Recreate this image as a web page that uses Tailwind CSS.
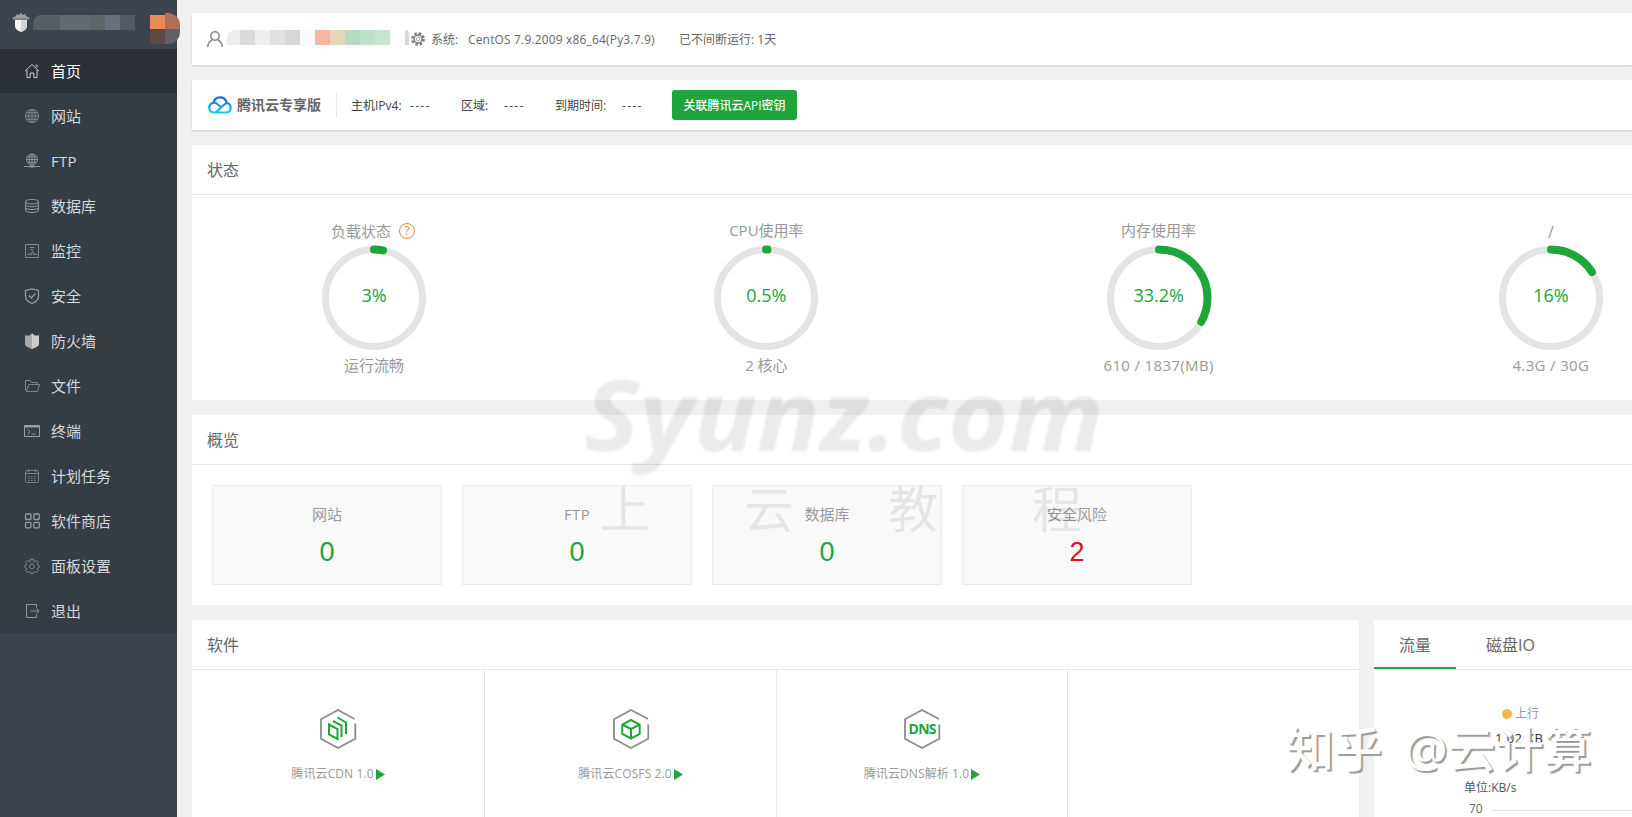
<!DOCTYPE html>
<html lang="zh-CN">
  <head>
    <meta charset="UTF-8" />
    <meta name="viewport" content="width=device-width, initial-scale=1.0" />
    <title>首页</title>
    <script src="https://cdn.jsdelivr.net/npm/@tailwindcss/browser@4"></script>
  </head>
  <body
    class="relative flex h-[817px] w-[1632px] overflow-hidden bg-[#f0f0f0] text-xs text-[#666] font-['Open_Sans','Noto_Sans_CJK_SC',sans-serif]"
  >
    <!-- sidebar -->
    <aside class="w-[177px] shrink-0 bg-[#3c444d]">
      <div class="flex h-[49px] items-start pl-3 pt-[13px]">
        <svg class="h-[19px] w-[18px] shrink-0" viewBox="0 0 18 19">
          <path d="M0 5l4-2 1-2 2 1 2-2 2 2 2-1 1 2 4 2-2 2H2z" fill="#9da1a5" />
          <path d="M3 7h12v6c0 3-3 5-6 6-3-1-6-3-6-6z" fill="#f5f5f5" />
          <path d="M9 7h6v6c0 3-3 5-6 6z" fill="#d2d4d6" />
          <path d="M1 6h16" stroke="#5d646b" stroke-width="1" />
        </svg>
        <div class="mt-0.5 ml-[3px] flex h-[15px] w-[102px] shrink-0 overflow-hidden rounded-tl-lg">
          <i class="w-[27px] bg-[#575e66]"></i>
          <i class="w-[30px] bg-[#636971]"></i>
          <i class="w-[15px] bg-[#5f6468]"></i>
          <i class="w-[15px] bg-[#697079]"></i>
          <i class="w-[15px] bg-[#555b62]"></i>
        </div>
        <div
          class="relative z-10 ml-[15px] grid h-[31px] w-[30px] shrink-0 grid-cols-2 grid-rows-2 overflow-hidden rounded-r-xl"
        >
          <i class="mt-0.5 bg-[#e98b54]"></i>
          <i class="bg-[#ad705a]"></i>
          <i class="bg-[#5d4a44]"></i>
          <i class="bg-[#606166]"></i>
        </div>
      </div>
      <ul class="bg-[#353d44] text-[15px] text-[#d5d8da]">
        <li class="flex h-11 items-center gap-[11px] bg-[#2c3138] pl-6 text-white">
          <svg class="size-4 text-[#c8cacc]" viewBox="0 0 16 16" fill="none" stroke="currentColor">
            <path d="M1 8.2L8 1.5l7 6.7M3 7v7.5h3.2V10h3.6v4.500H13V7M11.500 2.200h1.500v2.500" />
          </svg>
          首页
        </li>
        <li class="flex h-[45px] items-center gap-[11px] pl-6">
          <svg class="size-4 text-[#838a90]" viewBox="0 0 16 16" fill="none" stroke="currentColor">
            <circle cx="8" cy="8" r="6.500" />
            <ellipse cx="8" cy="8" rx="3.200" ry="6.500" />
            <path d="M8 1.500v13M1.500 8h13M2.500 4.800h11M2.500 11.200h11" />
          </svg>
          网站
        </li>
        <li class="flex h-[45px] items-center gap-[11px] pl-6">
          <svg class="size-4 text-[#8b9196]" viewBox="0 0 16 16" fill="none" stroke="currentColor">
            <circle cx="8" cy="6.500" r="5.500" />
            <ellipse cx="8" cy="6.500" rx="2.700" ry="5.500" />
            <path d="M8 1v11M2.500 6.500h11M3.200 3.800h9.600M3.200 9.300h9.600M0 13.500h16" />
            <path d="M5.500 13.500h5" stroke-width="2" />
          </svg>
          <span class="tracking-[.3px]">FTP</span>
        </li>
        <li class="flex h-[45px] items-center gap-[11px] pl-6">
          <svg class="size-4 text-[#92989d]" viewBox="0 0 16 16" fill="none" stroke="currentColor">
            <ellipse cx="8" cy="3.700" rx="6.500" ry="2.300" />
            <path d="M1.500 3.700v8.500c0 3 13 3 13 0V3.700M1.500 6.500c0 3 13 3 13 0M1.500 9.300c0 3 13 3 13 0" />
          </svg>
          数据库
        </li>
        <li class="flex h-[45px] items-center gap-[11px] pl-6">
          <svg class="size-4 text-[#7e858b]" viewBox="0 0 16 16" fill="none" stroke="currentColor">
            <path d="M1.500 1.500h13v13h-13zM5.500 4.500h5M6.500 6.500h2.500M3 12l2-1.500 1 1.500h1L8.500 8l1.500 4 1-1.500 2 1.500" />
          </svg>
          监控
        </li>
        <li class="flex h-[45px] items-center gap-[11px] pl-6">
          <svg class="size-4 text-[#989da1]" viewBox="0 0 16 16" fill="none" stroke="currentColor" stroke-width="1.200">
            <path d="M8 .8l6.500 1.700v6c0 3-3 5.500-6.500 7-3.500-1.500-6.500-4-6.500-7v-6z" />
            <path d="M4.800 7.500L7.300 10l4.200-4.500" />
          </svg>
          安全
        </li>
        <li class="flex h-[45px] items-center gap-[11px] pl-6">
          <svg class="size-4" viewBox="0 0 16 16">
            <path d="M1 2l2 .8 1.500-.6 1 .3L7 1l1-.8V16c-4-1.500-7-3-7-5z" fill="#aaa9a8" />
            <path d="M15 2l-2 .8-1.500-.6-1 .3L9 1 8 .2V16c4-1.500 7-3 7-5z" fill="#cfcdcb" />
          </svg>
          防火墙
        </li>
        <li class="flex h-[45px] items-center gap-[11px] pl-6">
          <svg class="size-4 text-[#7e858b]" viewBox="0 0 16 16" fill="none" stroke="currentColor">
            <path d="M2.500 13.500l-1-1v-10h4.500l1.500 2h6v2M2.500 13.500l2.300-7h10.700l-2 7z" />
          </svg>
          文件
        </li>
        <li class="flex h-[45px] items-center gap-[11px] pl-6">
          <svg class="size-4 text-[#9a9fa3]" viewBox="0 0 16 16" fill="none" stroke="currentColor">
            <path d="M.5 2.500h15v11H.5z" />
            <path d="M.5 3.500h15" stroke-width="2" />
            <path d="M3.500 6.500L6 8.700 3.500 11M7.500 11h4" />
          </svg>
          终端
        </li>
        <li class="flex h-[45px] items-center gap-[11px] pl-6">
          <svg class="size-4 text-[#777e84]" viewBox="0 0 16 16" fill="none" stroke="currentColor">
            <rect x="1.500" y="2.500" width="13" height="12" rx="1" />
            <path d="M1.500 5.500h13M4.500 1v3M11.500 1v3" />
            <path d="M4 8.500h8.500M4 10.500h8.500M4 12.500h8.500" stroke-dasharray="1.500 1.500" />
          </svg>
          计划任务
        </li>
        <li class="flex h-[45px] items-center gap-[11px] pl-6">
          <svg class="size-4 text-[#969b9f]" viewBox="0 0 16 16" fill="none" stroke="currentColor" stroke-width="1.300">
            <rect x="1.500" y="1" width="5.500" height="5.500" rx="1" />
            <rect x="9.800" y="1" width="5.500" height="5.500" rx="1" />
            <rect x="1.500" y="9.300" width="5.500" height="5.500" rx="1" />
            <rect x="9.800" y="9.300" width="5.500" height="5.500" rx="1" />
          </svg>
          软件商店
        </li>
        <li class="flex h-[45px] items-center gap-[11px] pl-6">
          <svg class="size-4 text-[#7e858b]" viewBox="0 0 16 16" fill="none" stroke="currentColor">
            <path d="M6.700 1.200h2.600l.4 1.800 1.300.6 1.600-1 1.800 1.800-1 1.600.6 1.300 1.200.3v1.900l-1.300.5-.6 1.300 1 1.600-1.700 1.700-1.600-1-1.300.5-.4 1.500H6.700l-.4-1.500-1.300-.5-1.600 1-1.700-1.700 1-1.600-.6-1.300-1.300-.5V7.600l1.200-.3.6-1.300-1-1.600 1.800-1.800 1.600 1 1.300-.6z" />
            <circle cx="8" cy="8.300" r="2.400" />
          </svg>
          面板设置
        </li>
        <li class="flex h-[45px] items-center gap-[11px] pl-6">
          <svg class="size-4 text-[#90969b]" viewBox="0 0 16 16" fill="none" stroke="currentColor">
            <path d="M12.500 4.500v-3H2.500v13h10v-3M6.500 8h8.500M12.500 5.500L15 8l-2.500 2.500" />
          </svg>
          退出
        </li>
      </ul>
    </aside>

    <main class="ml-[15px] flex w-[1440px] shrink-0 flex-col pt-[13px]">
      <!-- system info -->
      <div class="mb-[15px] flex h-[52px] shrink-0 items-center bg-white pl-[15px] shadow-[0_1px_2px_rgba(0,0,0,.15)]">
        <svg class="size-4" viewBox="0 0 16 16" fill="none" stroke="#888" stroke-width="1.500">
          <circle cx="8" cy="5" r="4.200" />
          <path d="M.8 16c0-4 2-6 4.500-7.200M15.200 16c0-4-2-6-4.500-7.200" />
        </svg>
        <div class="mb-[3px] ml-1 flex h-[15px] w-[163px] overflow-hidden rounded-tl-lg">
          <i class="w-[13px] bg-[#ededed]"></i>
          <i class="w-[15px] bg-[#dadada]"></i>
          <i class="w-[15px] bg-[#eee]"></i>
          <i class="w-[15px] bg-[#e0e0e0]"></i>
          <i class="w-[15px] bg-[#d7d7d7]"></i>
          <i class="w-[15px] bg-[#fafafa]"></i>
          <i class="w-[15px] bg-[#f8b5a0]"></i>
          <i class="w-[15px] bg-[#e8d6b8]"></i>
          <i class="w-[15px] bg-[#b5dbbf]"></i>
          <i class="w-[15px] bg-[#bce1c8]"></i>
          <i class="w-[15px] bg-[#c8e5d3]"></i>
        </div>
        <i class="mb-1 ml-[15px] h-[15px] w-1 rounded-tr-full bg-[#d8d8d8]"></i>
        <svg class="ml-[2px] size-[14px]" viewBox="0 0 14 14" fill="none" stroke="#777">
          <circle cx="7" cy="7" r="5.700" stroke-width="2.300" stroke-dasharray="2.500 1.977" />
          <circle cx="7" cy="7" r="4" stroke-width="1.500" />
          <circle cx="7" cy="7" r="1.800" stroke="#aaa" />
        </svg>
        <span class="ml-1.5 w-[37px] pt-0.5">系统:</span>
        <span class="w-[211px] whitespace-nowrap pt-0.5 tracking-[.16px]">CentOS 7.9.2009 x86_64(Py3.7.9)</span>
        <span class="pt-0.5">已不间断运行: 1天</span>
      </div>

      <!-- cloud host -->
      <div
        class="mb-[15px] flex h-[50px] shrink-0 items-center bg-white pl-4 text-[#444] shadow-[0_1px_2px_rgba(0,0,0,.15)]"
      >
        <svg class="h-[18px] w-6" viewBox="0 0 24 18" fill="none" stroke-width="2.200">
          <defs>
            <linearGradient id="cloud" x1="0" y1="0" x2="0" y2="1">
              <stop offset="0" stop-color="#1a86ea" />
              <stop offset="1" stop-color="#17c8ee" />
            </linearGradient>
          </defs>
          <path d="M5.500 7.200C6 3.500 8.500 1.400 12 1.400c3.500 0 5.800 2 6.500 4.800" stroke="#1670e5" />
          <path
            d="M13.500 11.500L9.300 8C5.500 5 1.300 8 1.300 11.500c0 3 2 5 5 5h1.500L16.500 8.300c3-2.600 6.200-.3 6.200 3.200 0 3-2 5-5 5H7"
            stroke="url(#cloud)"
          />
        </svg>
        <span class="ml-[5px] w-[99px] text-sm font-bold text-[#666]">腾讯云专享版</span>
        <i class="h-[25px] w-px bg-[#e3e3e3]"></i>
        <span class="ml-3.5 w-[59px] pt-0.5">主机IPv4:</span>
        <span class="w-[51px] pt-0.5 tracking-[1.300px]">----</span>
        <span class="w-[43px] pt-0.5">区域:</span>
        <span class="w-[51px] pt-0.5 tracking-[1.300px]">----</span>
        <span class="w-[67px] pt-0.5">到期时间:</span>
        <span class="w-[50px] pt-0.5 tracking-[1.300px]">----</span>
        <button class="h-[30px] w-[125px] rounded-[3px] bg-[#20a53a] pt-0.5 font-medium text-white">
          关联腾讯云API密钥
        </button>
      </div>

      <!-- status -->
      <section class="mb-[15px] h-[255px] shrink-0 bg-white">
        <h3 class="flex h-[50px] items-center border-b border-[#e6e6e6] pl-[15px] text-base">状态</h3>
        <div class="-ml-[14px] grid w-[1569px] grid-cols-4 text-center text-[15px] text-[#999]">
          <div class="flex flex-col items-center pt-6">
            <div class="-ml-0.5 flex h-[23px] items-center gap-2">
              <span>负载状态</span>
              <span
                class="flex size-4 items-center justify-center rounded-full border border-[#e08a3c] text-xs text-[#e08a3c]"
                >?</span
              >
            </div>
            <div class="relative mt-[3px] size-[106px]">
              <svg class="-rotate-90" viewBox="0 0 106 106" fill="none">
                <circle cx="53" cy="53" r="48.500" stroke="#e4e4e4" stroke-width="7" />
                <circle cx="53" cy="53" r="48.500" stroke="#20a53a" stroke-width="8" stroke-linecap="round" pathLength="100" stroke-dasharray="3 100" />
              </svg>
              <span class="absolute inset-0 flex items-center justify-center pb-1.5 text-lg text-[#20a53a]">3%</span>
            </div>
            <span class="mt-1">运行流畅</span>
          </div>
          <div class="flex flex-col items-center pt-6">
            <div class="h-[23px] pt-px">CPU使用率</div>
            <div class="relative mt-[3px] size-[106px]">
              <svg class="-rotate-90" viewBox="0 0 106 106" fill="none">
                <circle cx="53" cy="53" r="48.500" stroke="#e4e4e4" stroke-width="7" />
                <circle cx="53" cy="53" r="48.500" stroke="#20a53a" stroke-width="8" stroke-linecap="round" pathLength="100" stroke-dasharray="0.500 100" />
              </svg>
              <span class="absolute inset-0 flex items-center justify-center pb-1.5 text-lg text-[#20a53a]">0.5%</span>
            </div>
            <span class="mt-1">2 核心</span>
          </div>
          <div class="flex flex-col items-center pt-6">
            <div class="h-[23px] pt-px">内存使用率</div>
            <div class="relative mt-[3px] size-[106px]">
              <svg class="-rotate-90" viewBox="0 0 106 106" fill="none">
                <circle cx="53" cy="53" r="48.500" stroke="#e4e4e4" stroke-width="7" />
                <circle cx="53" cy="53" r="48.500" stroke="#20a53a" stroke-width="8" stroke-linecap="round" pathLength="100" stroke-dasharray="33.200 100" />
              </svg>
              <span class="absolute inset-0 flex items-center justify-center pb-1.5 text-lg text-[#20a53a]">33.2%</span>
            </div>
            <span class="mt-1 tracking-[.35px]">610 / 1837(MB)</span>
          </div>
          <div class="flex flex-col items-center pt-6">
            <div class="h-[23px] pt-px text-base">/</div>
            <div class="relative mt-[3px] size-[106px]">
              <svg class="-rotate-90" viewBox="0 0 106 106" fill="none">
                <circle cx="53" cy="53" r="48.500" stroke="#e4e4e4" stroke-width="7" />
                <circle cx="53" cy="53" r="48.500" stroke="#20a53a" stroke-width="8" stroke-linecap="round" pathLength="100" stroke-dasharray="16 100" />
              </svg>
              <span class="absolute inset-0 flex items-center justify-center pb-1.5 text-lg text-[#20a53a]">16%</span>
            </div>
            <span class="mt-1 tracking-[.35px]">4.3G / 30G</span>
          </div>
        </div>
      </section>

      <!-- overview -->
      <section class="mb-[15px] h-[190px] shrink-0 bg-white">
        <h3 class="flex h-[50px] items-center border-b border-[#e6e6e6] pl-[15px] text-base">概览</h3>
        <div class="flex gap-5 pl-5 pt-5 text-center text-[15px] text-[#999]">
          <div class="h-[100px] w-[230px] border border-[#ececec] bg-[#f9f9f9] pt-[18px]">
            <p>网站</p>
            <p class="mt-2.5 font-['Liberation_Sans'] text-[27px] leading-9 text-[#20a53a]">0</p>
          </div>
          <div class="h-[100px] w-[230px] border border-[#ececec] bg-[#f9f9f9] pt-[18px]">
            <p class="tracking-[.3px]">FTP</p>
            <p class="mt-2.5 font-['Liberation_Sans'] text-[27px] leading-9 text-[#20a53a]">0</p>
          </div>
          <div class="h-[100px] w-[230px] border border-[#ececec] bg-[#f9f9f9] pt-[18px]">
            <p>数据库</p>
            <p class="mt-2.5 font-['Liberation_Sans'] text-[27px] leading-9 text-[#20a53a]">0</p>
          </div>
          <div class="h-[100px] w-[230px] border border-[#ececec] bg-[#f9f9f9] pt-[18px]">
            <p>安全风险</p>
            <p class="mt-2.5 font-['Liberation_Sans'] text-[27px] leading-9 text-[#e01020]">2</p>
          </div>
        </div>
      </section>

      <div class="flex flex-1 gap-[15px]">
        <!-- software -->
        <section class="w-[1167px] shrink-0 bg-white">
          <h3 class="flex h-[50px] items-center border-b border-[#e6e6e6] pl-[15px] text-base">软件</h3>
          <div class="grid h-[147px] grid-cols-[293px_292px_291px_1fr] text-[#999]">
            <div class="flex flex-col items-center border-r border-[#e6e6e6] pt-[38px]">
              <svg class="h-[42px] w-[38px]" viewBox="0 0 38 42" fill="none" stroke="#8c8c8c" stroke-width="1.800">
                <path d="M35.500 11L19 2 2 11.300v19.400L19 40l17.300-9.300V15.500" />
                <path d="M10 16.500l8.500 4.500v10L10 26.500zM14 13l8.500 4.500V29M18.500 9.500L27 14.500V26" stroke="#20a53a" stroke-width="2" />
              </svg>
              <p class="mt-4 flex items-center tracking-[.1px]">
                腾讯云CDN 1.0<svg class="ml-0.5 h-[11px] w-[9px]" viewBox="0 0 9 11"><path d="M0 0l9 5.500L0 11z" fill="#20a53a" /></svg>
              </p>
            </div>
            <div class="flex flex-col items-center border-r border-[#e6e6e6] pt-[38px]">
              <svg class="h-[42px] w-[38px]" viewBox="0 0 38 42" fill="none" stroke="#8c8c8c" stroke-width="1.800">
                <path d="M36 11L19 2 2 11.300v19.400L19 40l17.300-9.300V16.500" />
                <path d="M19 12l8.700 4.500v9.500L19 30.500 10.300 26v-9.500zM10.300 16.500L19 21l8.700-4.500M19 21v9.500" stroke="#20a53a" stroke-width="2" />
              </svg>
              <p class="mt-4 flex items-center tracking-[.1px]">
                腾讯云COSFS 2.0<svg class="ml-0.5 h-[11px] w-[9px]" viewBox="0 0 9 11"><path d="M0 0l9 5.500L0 11z" fill="#20a53a" /></svg>
              </p>
            </div>
            <div class="flex flex-col items-center border-r border-[#e6e6e6] pt-[38px]">
              <svg class="h-[42px] w-[38px]" viewBox="0 0 38 42" fill="none" stroke="#8c8c8c" stroke-width="1.800">
                <path d="M36 11L19 2 2 11.300v19.400L19 40l17.300-9.300V16.500" />
                <text x="19.500" y="26" text-anchor="middle" class="text-sm font-bold" fill="#20a53a" stroke="none" textLength="28">DNS</text>
              </svg>
              <p class="mt-4 flex items-center tracking-[.1px]">
                腾讯云DNS解析 1.0<svg class="ml-0.5 h-[11px] w-[9px]" viewBox="0 0 9 11"><path d="M0 0l9 5.500L0 11z" fill="#20a53a" /></svg>
              </p>
            </div>
          </div>
        </section>

        <!-- traffic -->
        <section class="flex-1 bg-white">
          <div class="flex h-[50px] border-b border-[#e6e6e6] text-base">
            <span class="flex w-[82px] items-center justify-center border-b-2 border-[#20a53a] pt-0.5">流量</span>
            <span class="flex w-[109px] items-center justify-center">磁盘IO</span>
          </div>
          <div class="flex items-center gap-[3px] pl-32 pt-9 text-[#999]">
            <i class="size-[10px] rounded-full bg-[#f7b84b]"></i>上行
          </div>
          <p class="mt-1.5 pl-[121px] text-[13px] leading-5 tracking-[.4px] text-[#333]">1.02 KB</p>
          <p class="mt-8 pl-[90px] text-[#555]">单位:KB/s</p>
          <div class="mt-[5px] flex items-center gap-2 pl-[95px]">
            <span>70</span>
            <i class="mt-[3px] h-px flex-1 bg-[#ddd]"></i>
          </div>
        </section>
      </div>
    </main>

    <!-- watermarks -->
    <div class="pointer-events-none absolute left-[584px] top-[343px] origin-left scale-x-[1.056] text-black/8 blur-[1px]">
      <p class="text-[99px] font-bold italic leading-[140px]">Syunz.com</p>
    </div>
    <div class="pointer-events-none absolute left-[600px] top-[473px] flex gap-[94px] text-[50px] leading-[72px] text-black/8 blur-[0.500px]">
      <span>上</span><span>云</span><span>教</span><span>程</span>
    </div>
    <div
      class="pointer-events-none absolute left-[1286px] top-[713px] whitespace-nowrap text-[48px] font-medium leading-[72px] text-white [text-shadow:2px_2px_1px_#999] [word-spacing:10px]"
    >
      知乎 @云计算
    </div>
  </body>
</html>
